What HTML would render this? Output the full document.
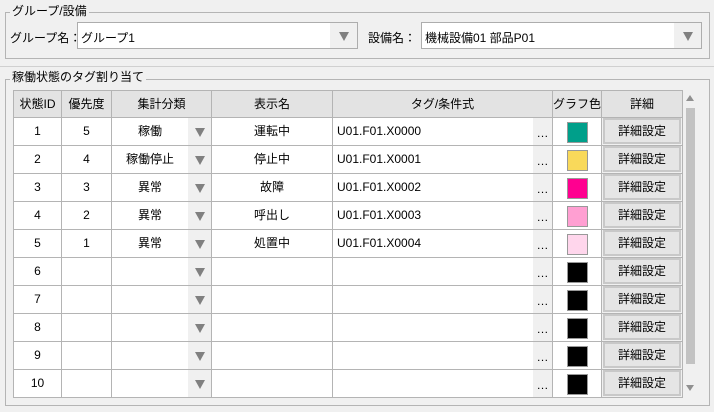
<!DOCTYPE html>
<html><head><meta charset="utf-8"><style>
*{box-sizing:border-box;margin:0;padding:0}
body{width:714px;height:412px;background:#f0f0f0;font-family:"Liberation Sans","Noto Sans CJK JP",sans-serif;font-size:12px;color:#000;position:relative;overflow:hidden}
.a{position:absolute}
.gb{position:absolute;border:1px solid #b4b4b4}
.lg{position:absolute;background:#f0f0f0;padding:0 2px;font-size:12px;line-height:14px}
.cb{position:absolute;background:#fff;border:1px solid #adadad;height:27px}
.cb span{position:absolute;left:3px;top:6px}
.cb i{position:absolute;right:0;top:0;width:27px;height:25px;background:#f0f0f0}
.tri{position:absolute;width:0;height:0;border-left:5px solid transparent;border-right:5px solid transparent;border-top:9px solid #808080}
.c{position:absolute;border-right:1px solid #b4b4b4;border-bottom:1px solid #b4b4b4;text-align:center;line-height:27px;height:28px}
.h{background:#e3e3e3}
.w{background:#fff}
.sw{position:absolute;width:21px;height:21px;border:1px solid #999}
.bt{position:absolute;width:78px;height:26px;background:#e5e5e5;border:2px solid #c8c8c8;text-align:center;line-height:22px}
</style></head><body>
<div class="gb" style="left:5px;top:12px;width:705px;height:47px"></div>
<div class="lg" style="left:10px;top:4px">グループ/設備</div>
<div class="a" style="left:10px;top:29px">グループ名：</div>
<div class="cb" style="left:77px;top:22px;width:281px"><span>グループ1</span><i><b class="tri" style="left:9px;top:9px"></b></i></div>
<div class="a" style="left:368px;top:29px">設備名：</div>
<div class="cb" style="left:421px;top:22px;width:281px"><span>機械設備01 部品P01</span><i><b class="tri" style="left:9px;top:9px"></b></i></div>
<div class="a" style="left:0;top:66px;width:714px;border-top:1px solid #d0d0d0"></div>
<div class="gb" style="left:5px;top:79px;width:705px;height:327px"></div>
<div class="lg" style="left:10px;top:70px">稼働状態のタグ割り当て</div>
<div class="a" style="left:13px;top:90px;width:670px;height:308px;border-left:1px solid #b4b4b4;border-top:1px solid #b4b4b4;background:#fff"></div>
<div id="t"></div>
<div class="a" style="left:683px;top:90px;width:16px;height:308px;background:#f0f0f0"></div>
<div class="a" style="left:686px;top:95px;width:0;height:0;border-left:4px solid transparent;border-right:4px solid transparent;border-bottom:6px solid #909090"></div>
<div class="a" style="left:686px;top:108px;width:9px;height:256px;background:#c2c2c2"></div>
<div class="a" style="left:686px;top:385px;width:0;height:0;border-left:4px solid transparent;border-right:4px solid transparent;border-top:6px solid #909090"></div>
<script>
var X=[14,62,112,212,333,553,602,683];
var H=["状態ID","優先度","集計分類","表示名","タグ/条件式","グラフ色","詳細"];
var s="";
for(var i=0;i<7;i++)s+='<div class="c h" style="left:'+X[i]+'px;top:91px;width:'+(X[i+1]-X[i])+'px;height:27px;line-height:26px">'+H[i]+'</div>';
var D=[["1","5","稼働","運転中","U01.F01.X0000","#009f8a"],["2","4","稼働停止","停止中","U01.F01.X0001","#f9d95a"],["3","3","異常","故障","U01.F01.X0002","#ff0090"],["4","2","異常","呼出し","U01.F01.X0003","#ff9fd2"],["5","1","異常","処置中","U01.F01.X0004","#ffd6ec"]];
for(var r=0;r<10;r++){var y=118+r*28;var d=D[r]||[String(r+1),"","","","","#000"];
s+='<div class="c w" style="left:14px;top:'+y+'px;width:48px">'+d[0]+'</div>';
s+='<div class="c w" style="left:62px;top:'+y+'px;width:50px">'+d[1]+'</div>';
s+='<div class="c w" style="left:112px;top:'+y+'px;width:76px;border-right:none">'+d[2]+'</div>';
s+='<div class="c" style="left:188px;top:'+y+'px;width:24px;background:#f0f0f0"><b class="tri" style="left:7px;top:10px"></b></div>';
s+='<div class="c w" style="left:212px;top:'+y+'px;width:121px">'+d[3]+'</div>';
s+='<div class="c w" style="left:333px;top:'+y+'px;width:200px;text-align:left;padding-left:4px;border-right:none">'+d[4]+'</div>';
s+='<div class="c" style="left:533px;top:'+y+'px;width:20px;background:#f0f0f0;line-height:30px">…</div>';
s+='<div class="c w" style="left:553px;top:'+y+'px;width:49px"><div class="sw" style="left:14px;top:4px;background:'+d[5]+'"></div></div>';
s+='<div class="c" style="left:602px;top:'+y+'px;width:81px;background:#f0f0f0"><div class="bt" style="left:1px;top:0">詳細設定</div></div>';}
document.getElementById("t").innerHTML=s;
</script>
</body></html>
